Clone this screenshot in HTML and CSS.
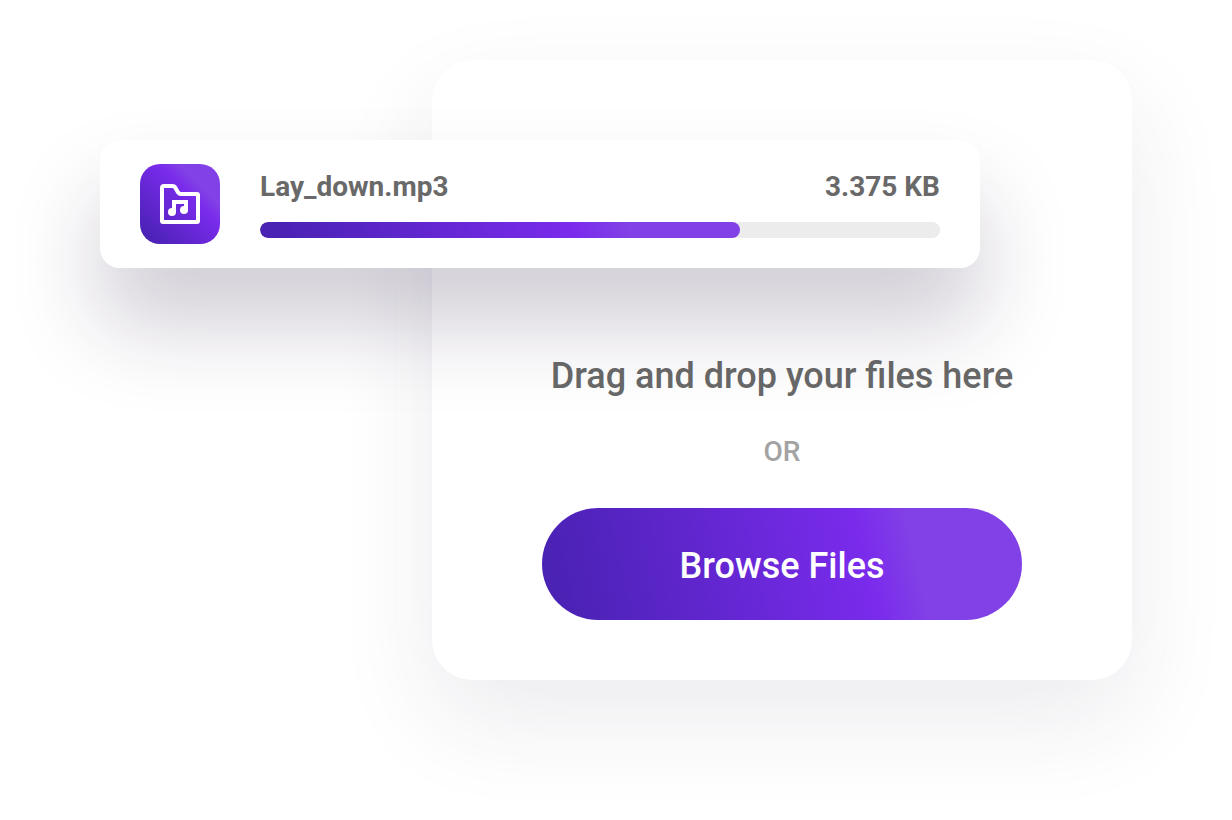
FILE: index.html
```
<!DOCTYPE html>
<html lang="en">

<head>
    <meta charset="UTF-8">
    <meta name="viewport" content="width=device-width, initial-scale=1.0">
    <title>File Upload</title>
    <link rel="stylesheet" href="styles.css">
</head>

<body>
    <main class="uploader">
        <section class="drop-card">
            <h1 class="drop-title">Drag and drop your files here</h1>
            <p class="drop-or">OR</p>
            <button type="button" class="browse-btn">Browse Files</button>
        </section>

        <section class="file-card">
            <div class="file-icon">
                <svg width="40" height="40" viewBox="0 0 40 40" fill="none" stroke="#fff" stroke-width="4" aria-hidden="true">
                    <path stroke-linejoin="round" d="M4 2H12.5C14 2 14.8 2.6 15.5 4L17.8 8C18.6 9.4 19.5 10 21 10H37Q38 10 38 11V37Q38 38 37 38H3Q2 38 2 37V4Q2 2 4 2Z" />
                    <path d="M14 28V18H26V26" />
                    <circle cx="12" cy="28" r="4" fill="#fff" stroke="none" />
                    <circle cx="24" cy="26" r="4" fill="#fff" stroke="none" />
                </svg>
            </div>
            <div class="file-info">
                <div class="file-row">
                    <label for="fileProgress">Lay_down.mp3</label>
                    <span>3.375 KB</span>
                </div>
                <progress id="fileProgress" class="file-progress" value="70.6" max="100"></progress>
            </div>
        </section>
    </main>
</body>

</html>
```

FILE: styles.css
```
* {
    box-sizing: border-box;
}

body {
    margin: 0;
    min-height: 100vh;
    font-family: Roboto, sans-serif;
    background-color: #fff;
    color: #696969;
    overflow-x: hidden;
}

/* both cards share one row and overlap in the middle column */
.uploader {
    display: grid;
    grid-template-columns: 332fr 548fr 152fr;
    align-items: start;
    padding: 60px 100px;
}

.drop-card {
    grid-area: 1 / 2 / 2 / 4;
    display: flex;
    flex-direction: column;
    align-items: center;
    gap: 40px;
    padding: 296px 40px 60px;
    background-color: #fff;
    border-radius: 40px;
    box-shadow: 0 40px 100px rgba(40, 40, 75, 0.09);
}

.drop-title {
    margin: 0;
    font-size: 36px;
    line-height: 40px;
    font-weight: 500;
}

.drop-or {
    margin: 0;
    font-size: 28px;
    line-height: 32px;
    font-weight: 500;
    color: #a3a3a3;
}

.browse-btn {
    width: 100%;
    max-width: 480px;
    height: 112px;
    padding: 4px 0 0;
    border: none;
    border-radius: 56px;
    background: linear-gradient(77deg, #4a22b4 4%, #7a2bec 67%, #8241e6 77%);
    color: #fff;
    font-family: inherit;
    font-size: 36px;
    font-weight: 500;
    cursor: pointer;
}

.file-card {
    grid-area: 1 / 1 / 2 / 3;
    display: flex;
    align-items: center;
    gap: 40px;
    margin-top: 80px;
    padding: 24px 40px;
    background-color: #fff;
    border-radius: 20px;
    box-shadow: 0 56px 88px rgba(33, 16, 59, 0.21);
}

.file-icon {
    display: flex;
    align-items: center;
    justify-content: center;
    width: 80px;
    height: 80px;
    border-radius: 20px;
    background: linear-gradient(45deg, #4a22b4 8%, #7a2bec 62%, #8241e6 74%);
}

.file-info {
    flex: 1;
    display: flex;
    flex-direction: column;
    gap: 18px;
}

.file-row {
    display: flex;
    justify-content: space-between;
    font-size: 28px;
    line-height: 34px;
    font-weight: 700;
}

.file-progress {
    display: block;
    width: 100%;
    height: 16px;
    border: none;
    border-radius: 8px;
    overflow: hidden;
    appearance: none;
    -webkit-appearance: none;
    background-color: #ececec;
}

.file-progress::-webkit-progress-bar {
    background-color: #ececec;
    border-radius: 8px;
}

.file-progress::-webkit-progress-value {
    background: linear-gradient(77deg, #4a22b4 4%, #7a2bec 65%, #8241e6 77%);
    border-radius: 8px;
}
```
